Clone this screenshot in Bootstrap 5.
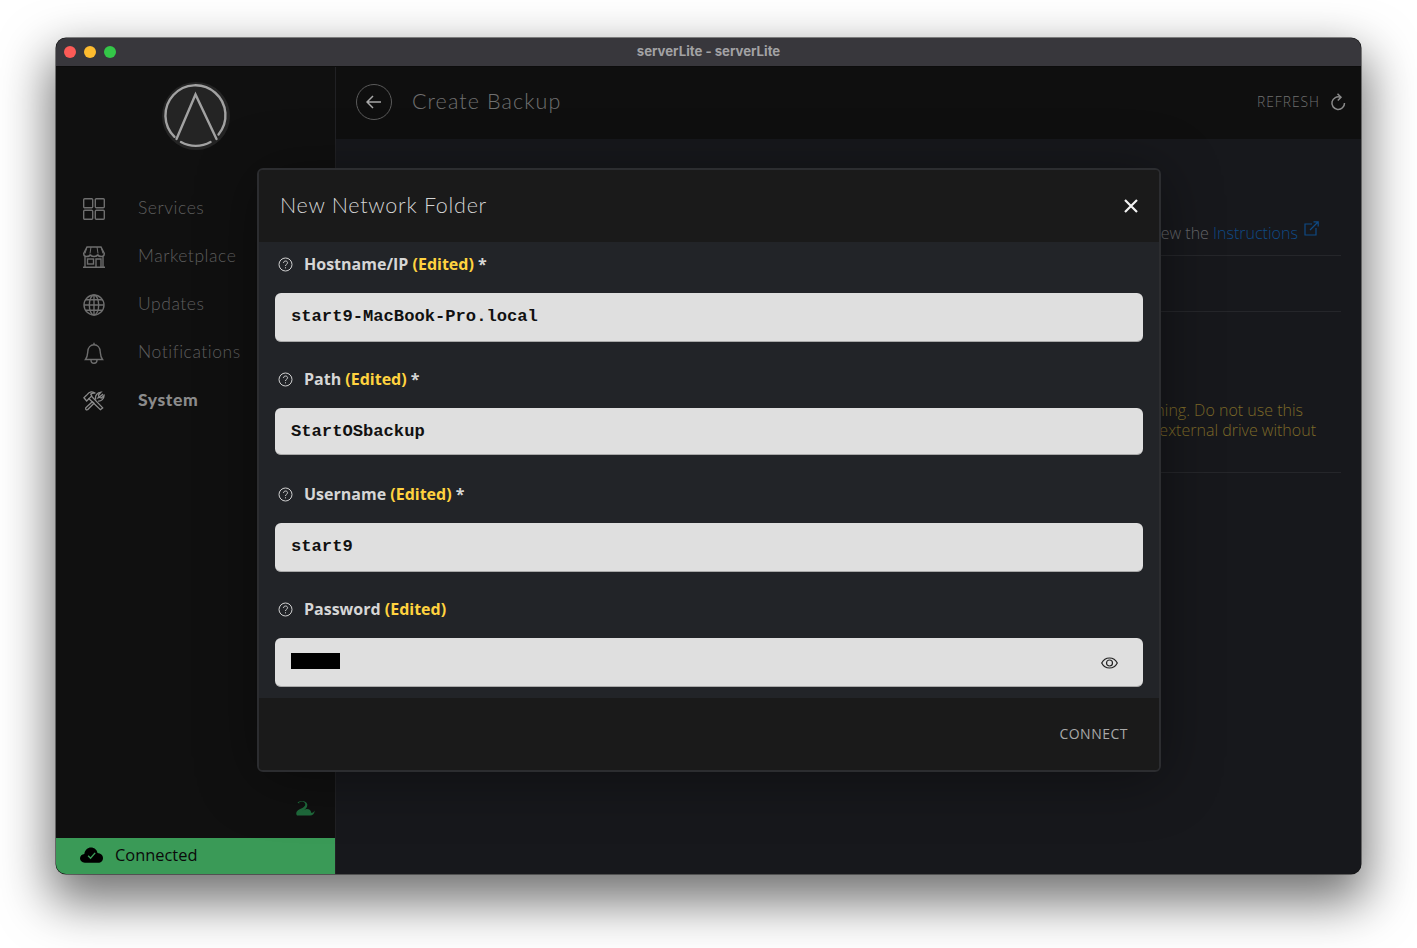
<!DOCTYPE html>
<html lang="en">
<head>
<meta charset="utf-8">
<title>serverLite</title>
<link rel="stylesheet" href="https://cdn.jsdelivr.net/npm/bootstrap@5.3.0/dist/css/bootstrap.min.css">
<style>
html,body{height:100%;}
body{background:#fff;font-family:"Open Sans",sans-serif;overflow:hidden;}
.stage{padding:38px 56px 0;height:948px;}
.win{position:relative;width:1305px;height:836px;border-radius:10px;overflow:hidden;background:#101010;box-shadow:0 0 0 .5px #1c1c1c,0 22px 50px 6px rgba(0,0,0,.55);}
.titlebar{height:29px;padding-bottom:2px;background:#38373c;border-bottom:1px solid #0c0c0c;position:relative;color:#a2a2a4;font:700 13.2px "Inter",sans-serif;}
.dots{position:absolute;left:8px;top:8px;}
.dot{width:12px;height:12px;border-radius:50%;display:block;}
.d1{background:#fc5b57}.d2{background:#febc2f}.d3{background:#34c748}
.main{height:807px;}
.side{width:280px;flex:none;background:#101010;border-right:1px solid #212124;}
.logo-wrap{height:98px;padding-top:15px;}
.navlist{margin-top:20px;}
.navrow{height:48px;padding-left:27px;color:#5e5e5e;font:300 17.5px "Lato",sans-serif;letter-spacing:.55px;}
.navrow span{padding-bottom:4px;}
.navrow svg{width:22px;height:22px;margin-right:33px;flex:none;stroke:#6e6e6e;fill:none;stroke-width:1.4;}
.navrow.on{color:#8b8b8b;font-weight:900;letter-spacing:.6px;}
.navrow.on svg{stroke:#8b8b8b;}
.snake-row{height:36px;padding-right:20px;padding-bottom:22px;}
.conn{height:36px;padding-bottom:2px;background:#3a9a57;color:#0a0a0a;padding-left:24px;font-size:16.4px;font-weight:500;flex:none;}
.conn svg{margin-right:12px;}
.pane{background:#17181c;min-width:0;}
.topbar{height:72px;background:#0f0f0f;padding:0 15px 2px 20px;color:#666;}
.backbtn{width:36px;height:36px;border:1px solid #5a5a5a;border-radius:50%;margin-right:20px;}
.pagetitle{font:300 21.5px "Lato",sans-serif;letter-spacing:1.1px;color:#707070;padding-bottom:2px;}
.refresh{font-size:13.8px;font-weight:300;letter-spacing:1px;color:#707070;}
.refresh svg{margin-left:2px;}
.bgrow{margin:0 20px;border-bottom:1px solid #25262a;color:#66676b;font-weight:300;font-size:16px;line-height:20px;text-align:right;}
.r1{padding:82px 22px 11px 0;line-height:22px;}
.r1 a{color:#0f4a85;text-decoration:none;}
.r1 svg{vertical-align:3px;margin-left:2px;}
.r2{height:56px;}
.r3{padding:88px 0 32px;color:#7d6928;}
.l1{padding-right:38px;}
.l2{padding-right:25px;}
.dialog{position:absolute;left:201px;top:130px;width:904px;height:604px;background:#1a1a1a;border:2px solid #2c2d30;border-radius:6px;box-shadow:0 6px 60px rgba(0,0,0,.4);overflow:hidden;}
.dialog .modal-header{height:72px;padding:0 21px 3px 21px;border:0;background:#1a1a1a;border-radius:0;}
.dlgtitle{font:300 21.5px "Lato",sans-serif;letter-spacing:.72px;color:#d4d4d4;margin:0;}
.dialog .modal-body{background:#222428;height:456px;flex:none;padding:10px 16px 0 16px;}
.fieldlabel{height:24px;margin-bottom:17px;padding-left:3px;color:#d6d6d6;font-size:16px;font-weight:700;line-height:24px;}
.fieldlabel svg{margin-right:11px;}
.edited{color:#ffd23f;}
.fieldgap{margin-bottom:25px;}
.inp.form-control,.inp-box{height:49px;background:#dfdfdf;border:0;border-bottom:1px solid #a9a9a9;border-radius:6px;padding:0 16px 1px;font:700 17.15px "Liberation Mono",monospace;color:#111;box-shadow:none;}
.inp.short{height:47px;margin-bottom:27px;padding:1px 16px 0;}
.pw-mask{display:block;width:49px;height:16px;background:#000;margin-top:-3px;}
.inp-box svg{margin-top:1px;}
.inp-box{padding:0 25px 0 16px;}
.dialog .modal-footer{flex:1;border:0;background:#1a1a1a;padding:0 31px 2px 0;border-radius:0;}
.connect{font-size:14px;letter-spacing:.5px;color:#a8a8a8;font-weight:400;background:none;border:0;padding:0;}
.closebtn{background:none;border:0;padding:0;line-height:0;margin-top:2px;}
</style>
</head>
<body>
<div class="stage">
<div class="win">
  <div class="titlebar d-flex align-items-center justify-content-center">
    <div class="dots d-flex gap-2"><span class="dot d1"></span><span class="dot d2"></span><span class="dot d3"></span></div>
    serverLite - serverLite
  </div>
  <div class="main d-flex">
    <aside class="side d-flex flex-column">
      <div class="logo-wrap d-flex justify-content-center">
        <svg width="68" height="68" viewBox="0 0 68 68" fill="none" stroke="#a2a2a2" stroke-width="2.4" stroke-linecap="round">
          <circle cx="34" cy="34" r="34" fill="#242424" stroke="none"/>
          <path d="M12.500 54.800 A 30 30 0 1 1 56.500 52.500"/>
          <path d="M19 60 A 30 30 0 0 0 48.500 60"/>
          <path d="M14.500 57 L33.500 12.500 L54.500 57" stroke-linejoin="miter"/>
        </svg>
      </div>
      <nav class="navlist">
        <div class="navrow d-flex align-items-center"><svg viewBox="0 0 22 22"><rect x=".7" y=".7" width="9" height="9" rx="1"/><rect x="12.300" y=".7" width="9" height="9" rx="1"/><rect x=".7" y="12.300" width="9" height="9" rx="1"/><rect x="12.300" y="12.300" width="9" height="9" rx="1"/></svg><span>Services</span></div>
        <div class="navrow d-flex align-items-center"><svg viewBox="0 0 22 22"><path d="M0 21.300H22M2 10.500V21.300M20 10.500V21.300"/><path d="M4 1H18L21.300 7.500C21.300 9.500 19.800 10.500 18.600 10.500C17 10.500 15 10 14.700 8.500C14.300 10 12.500 10.500 11 10.500C9.500 10.500 7.700 10 7.300 8.500C7 10 5 10.500 3.400 10.500C2.200 10.500 .7 9.500 .7 7.500Z"/><path d="M4 1 2 7.500M8 1 7 7.500M14 1 15 7.500M18 1 20 7.500" stroke-width="1"/><rect x="4.500" y="13" width="6" height="5"/><path d="M13 21V13H18V21"/></svg><span>Marketplace</span></div>
        <div class="navrow d-flex align-items-center"><svg viewBox="0 0 22 22"><circle cx="11" cy="11" r="10"/><ellipse cx="11" cy="11" rx="4.700" ry="10"/><path d="M11 1V21M1 11H21M2.500 5.800H19.500M2.500 16.200H19.500"/></svg><span>Updates</span></div>
        <div class="navrow d-flex align-items-center"><svg viewBox="0 0 22 22"><path d="M2.500 17.500C4.500 15 4.500 13.500 4.800 9.500 5 5.500 7.500 2.800 11 2.800S17 5.500 17.200 9.500C17.500 13.500 17.500 15 19.500 17.500Z"/><path d="M11 .8V2.800M8 18C8 20 9.300 21.300 11 21.300S14 20 14 18"/></svg><span>Notifications</span></div>
        <div class="navrow on d-flex align-items-center"><svg viewBox="0 0 24 22" stroke-width="1.500"><path d="M6 8 19 20.500 21.500 18.500 9 5.500"/><path d="M1 7.500 4 11 9.500 5.500 8.500 3.500C10 2.500 12 2 13.500 2.500 10.500 0 7 .5 4.500 4L3.500 5Z"/><path d="M15.500 8.200 22 3.500M5 20.500 12 13.500 10.200 11.800 3 18.500C2.500 20 3.500 21 5 20.500Z"/><path d="M14 9.500C13 7 14 3.500 17 2L19.500 1.500 16.800 4.500 17.500 7 20 7.800 23 5C23 8.500 20 11.500 16.500 11.200"/></svg><span>System</span></div>
      </nav>
      <div class="flex-grow-1"></div>
      <div class="snake-row d-flex justify-content-end align-items-end">
        <svg width="20" height="15" viewBox="0 0 20 15" fill="#1f6b3c"><path d="M4 1.500C6 0 9 .3 10 2.500 10.800 4.300 9.500 5.800 7.800 6.800 6 7.800 3 8.400 1.800 10.500 1 12 1 13.500 2 14.500H15C18 14.500 20 12 19.500 9.500 19 11 17.500 12 16 11.800 16.500 9.500 14 7.500 11.500 8L7 9.500C10.500 8.500 12.500 6.500 12.300 3.500 12 .5 7.500-1 4.200.5 3.700.8 3 1 2.500 1.700L4.500 2.500Z"/></svg>
      </div>
      <div class="conn d-flex align-items-center">
        <svg width="23" height="16" viewBox="0 0 24 16"><path fill="#000" d="M5 16C2 16 0 14 0 11.500 0 9 2 7.200 4.500 7 5 3 8 .3 11.500 .3 14.800 .3 17.500 2.500 18.300 5.800 21.500 6 24 8.200 24 11 24 13.800 22 16 19 16Z"/><path d="M8.500 8.800 11 11.300 15.800 5.800" fill="none" stroke="#3a9a57" stroke-width="1.500"/></svg>
        Connected
      </div>
    </aside>
    <section class="pane flex-grow-1">
      <header class="topbar d-flex align-items-center">
        <div class="backbtn d-flex align-items-center justify-content-center">
          <svg width="16" height="14" viewBox="0 0 16 14" fill="none" stroke="#a8a8a8" stroke-width="1.500"><path d="M15 7H1.500M7 1 1 7 7 13"/></svg>
        </div>
        <div class="pagetitle">Create Backup</div>
        <div class="ms-auto refresh d-flex align-items-center gap-2">REFRESH
          <svg width="16" height="18" viewBox="0 0 16 18" fill="none" stroke="#8a8a8a" stroke-width="1.500"><path d="M10.500 4.300A6.300 6.300 0 1 0 14.500 10"/><path d="M7.500 .8 11 4.300 7.800 7.500"/></svg>
        </div>
      </header>
      <div class="bgrow r1">To restore from a network folder, view the <a href="#">Instructions</a>
        <svg width="15" height="15" viewBox="0 0 15 15" fill="none" stroke="#0f4a85" stroke-width="1.200"><path d="M8 3H1V14H12V7M6 9 14 1M9.500 .8H14.200V5.500"/></svg>
      </div>
      <div class="bgrow r2"></div>
      <div class="bgrow r3">
        <div class="l1">Warning. Do not use this</div>
        <div class="l2">network folder or external drive without</div>
      </div>
    </section>
  </div>

  <div class="dialog modal-content">
    <div class="modal-header d-flex justify-content-between align-items-center">
      <h2 class="dlgtitle">New Network Folder</h2>
      <button class="closebtn" aria-label="Close"><svg width="14" height="14" viewBox="0 0 14 14" stroke="#f2f2f2" stroke-width="2.200"><path d="M1 1 13 13M13 1 1 13"/></svg></button>
    </div>
    <div class="modal-body">
      <div class="fieldlabel d-flex align-items-center">
        <svg width="15" height="15" viewBox="0 0 15 15" fill="none" stroke="#cfcfcf" stroke-width="1"><circle cx="7.500" cy="7.500" r="6.500"/><path d="M5.500 6C5.500 4.700 6.500 4 7.600 4 8.800 4 9.600 4.800 9.600 5.800 9.600 7.200 7.500 7.200 7.500 9"/><path d="M7.500 10.300V11.300"/></svg>
        <span>Hostname/IP <span class="edited">(Edited)</span> *</span>
      </div>
      <input class="inp form-control fieldgap" value="start9-MacBook-Pro.local">
      <div class="fieldlabel d-flex align-items-center">
        <svg width="15" height="15" viewBox="0 0 15 15" fill="none" stroke="#cfcfcf" stroke-width="1"><circle cx="7.500" cy="7.500" r="6.500"/><path d="M5.500 6C5.500 4.700 6.500 4 7.600 4 8.800 4 9.600 4.800 9.600 5.800 9.600 7.200 7.500 7.200 7.500 9"/><path d="M7.500 10.300V11.300"/></svg>
        <span>Path <span class="edited">(Edited)</span> *</span>
      </div>
      <input class="inp short form-control" value="StartOSbackup">
      <div class="fieldlabel d-flex align-items-center">
        <svg width="15" height="15" viewBox="0 0 15 15" fill="none" stroke="#cfcfcf" stroke-width="1"><circle cx="7.500" cy="7.500" r="6.500"/><path d="M5.500 6C5.500 4.700 6.500 4 7.600 4 8.800 4 9.600 4.800 9.600 5.800 9.600 7.200 7.500 7.200 7.500 9"/><path d="M7.500 10.300V11.300"/></svg>
        <span>Username <span class="edited">(Edited)</span> *</span>
      </div>
      <input class="inp form-control fieldgap" value="start9">
      <div class="fieldlabel d-flex align-items-center">
        <svg width="15" height="15" viewBox="0 0 15 15" fill="none" stroke="#cfcfcf" stroke-width="1"><circle cx="7.500" cy="7.500" r="6.500"/><path d="M5.500 6C5.500 4.700 6.500 4 7.600 4 8.800 4 9.600 4.800 9.600 5.800 9.600 7.200 7.500 7.200 7.500 9"/><path d="M7.500 10.300V11.300"/></svg>
        <span>Password <span class="edited">(Edited)</span></span>
      </div>
      <div class="inp-box d-flex align-items-center justify-content-between">
        <span class="pw-mask"></span>
        <svg width="17" height="12" viewBox="0 0 17 12" fill="none" stroke="#222" stroke-width="1.200"><path d="M.7 6C2.500 2.500 5.300 1 8.500 1S14.500 2.500 16.300 6C14.500 9.500 11.700 11 8.500 11S2.500 9.500 .7 6Z"/><circle cx="8.500" cy="6" r="3"/></svg>
      </div>
    </div>
    <div class="modal-footer d-flex justify-content-end align-items-center">
      <button class="connect">CONNECT</button>
    </div>
  </div>
</div>
</div>
<script src="https://cdn.jsdelivr.net/npm/bootstrap@5.3.0/dist/js/bootstrap.bundle.min.js"></script>
</body>
</html>
